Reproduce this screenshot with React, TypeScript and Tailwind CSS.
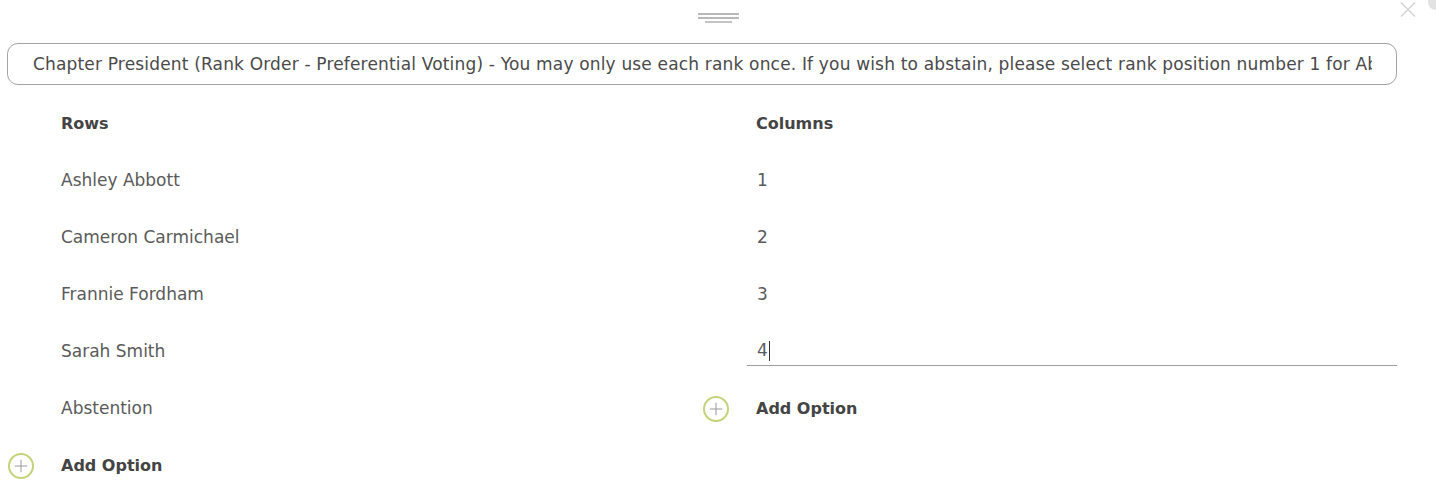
import { Plus } from 'lucide-react';

const rows = ['Ashley Abbott', 'Cameron Carmichael', 'Frannie Fordham', 'Sarah Smith', 'Abstention'];
const columns = ['1', '2', '3'];

const font = { fontFamily: '"DejaVu Sans", "Noto Sans", sans-serif' };

function AddButton() {
    return (
        <div className="flex h-[57px] items-center">
            <div className="flex w-[53px] items-center">
                <span className="flex h-[26px] w-[26px] items-center justify-center rounded-full border-2 border-[#c5d27a]">
                    <Plus size={20} strokeWidth={1.2} className="text-[#9a9a9a]" />
                </span>
            </div>
            <span className="text-[16px] font-bold text-[#444444]">Add Option</span>
        </div>
    );
}

export default function App() {
    return (
        <div className="relative h-[488px] w-full overflow-hidden bg-white text-[#555555]" style={font}>
            {/* drag handle */}
            <div className="flex flex-col items-center gap-[2px] pt-[13px]">
                <div className="h-[2px] w-[41px] bg-[#b8b8b8]" />
                <div className="h-[2px] w-[41px] bg-[#b8b8b8]" />
                <div className="h-[2px] w-[27px] bg-[#c4c4c4]" />
            </div>

            {/* close + scroll thumb */}
            <svg className="absolute left-[1400px] top-[2px]" width="16" height="15" viewBox="0 0 16 15">
                <path d="M1 0.5 L15 14.5 M15 0.5 L1 14.5" stroke="#d6d6d6" strokeWidth="1.6" />
            </svg>
            <div className="absolute left-[1428px] top-[-6px] h-[16px] w-[16px] rounded-full bg-[#e2e2e2]" />

            <div className="pl-[7px] pr-[39px] pt-[20px]">
                <div className="flex h-[42px] items-center overflow-hidden whitespace-nowrap rounded-[11px] border border-[#a3a3a3] pl-[25px] pr-[24px] pt-[2px] text-[17px] tracking-[0.17px] text-[#4a4a4a]">
                    <span className="overflow-hidden">
                        Chapter President (Rank Order - Preferential Voting) - You may only use each rank once. If you wish to abstain, please select rank position number 1 for Abstention.
                    </span>
                </div>

                <div className="mt-[10px] grid grid-cols-[695px_1fr] pl-[1px]">
                    {/* Rows */}
                    <div className="flex flex-col">
                        <div className="flex h-[57px] items-center pl-[53px] text-[16px] font-bold text-[#444444]">Rows</div>
                        {rows.map((r) => (
                            <div key={r} className="flex h-[57px] items-center pl-[53px] text-[17px] text-[#5a5a5a]">
                                {r}
                            </div>
                        ))}
                        <AddButton />
                    </div>

                    {/* Columns */}
                    <div className="flex flex-col">
                        <div className="flex h-[57px] items-center pl-[53px] text-[16px] font-bold text-[#444444]">Columns</div>
                        {columns.map((c) => (
                            <div key={c} className="flex h-[57px] items-center pl-[54px] text-[17px] text-[#5a5a5a]">
                                {c}
                            </div>
                        ))}
                        {/* row being edited */}
                        <div className="h-[57px] pl-[44px]">
                            <div className="mt-[14px] flex h-[29px] items-center border-b border-[#9c9c9c] pl-[10px] text-[17px] text-[#5a5a5a]">
                                4
                                <span className="ml-[1px] inline-block h-[20px] w-px bg-[#333333]" />
                            </div>
                        </div>
                        <AddButton />
                    </div>
                </div>
            </div>
        </div>
    );
}
